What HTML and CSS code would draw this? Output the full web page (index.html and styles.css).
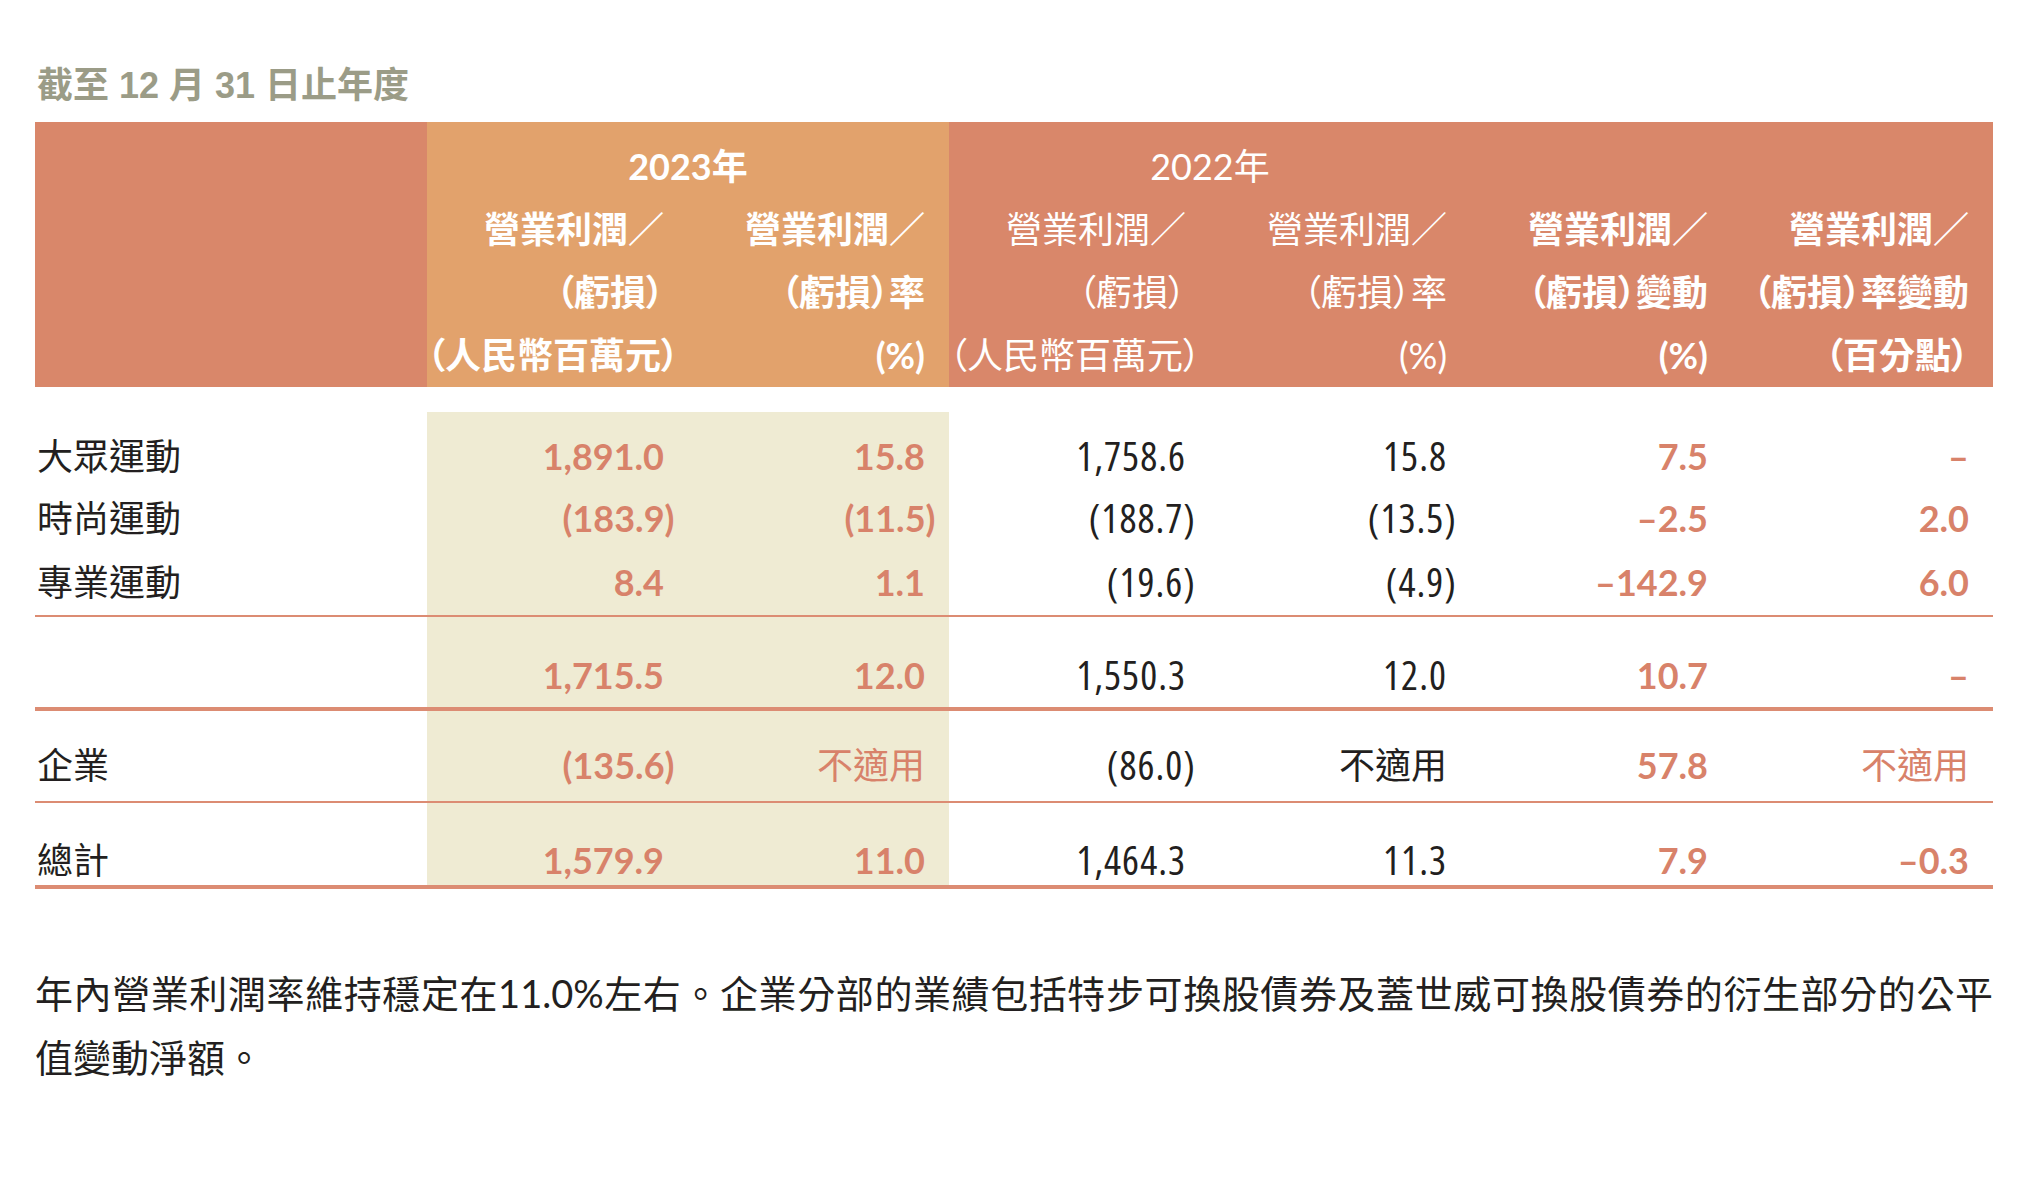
FILE: index.html
```html
<!DOCTYPE html>
<html lang="zh-Hant">
<head>
<meta charset="utf-8">
<title>營業利潤／（虧損）</title>
<link rel="stylesheet" href="styles.css">
</head>
<body>
<div class="page">
  <h2 class="title">截至 12 月 31 日止年度</h2>
  <table class="seg">
    <colgroup>
      <col class="c-label">
      <col class="c-num"><col class="c-num"><col class="c-num">
      <col class="c-num"><col class="c-num"><col class="c-num">
    </colgroup>
    <thead>
      <tr class="yr">
        <th class="lbl"></th>
        <th class="y23 b" colspan="2">2023年</th>
        <th colspan="2">2022年</th>
        <th colspan="2"></th>
      </tr>
      <tr class="hd">
        <th class="lbl"></th>
        <th class="y23 b">營業利潤／<br>（虧損）<br><span class="ov">（人民幣百萬元）</span></th>
        <th class="y23 b">營業利潤／<br>（虧損）率<br>(%)</th>
        <th>營業利潤／<br>（虧損）<br><span class="ov">（人民幣百萬元）</span></th>
        <th>營業利潤／<br>（虧損）率<br>(%)</th>
        <th class="b">營業利潤／<br>（虧損）變動<br>(%)</th>
        <th class="b">營業利潤／<br>（虧損）率變動<br>（百分點）</th>
      </tr>
    </thead>
    <tbody>
      <tr class="gap"><td colspan="7"></td></tr>
      <tr class="r1">
        <td class="lbl">大眾運動</td>
        <td class="s o">1,891.0</td>
        <td class="s o">15.8</td>
        <td class="k">1,758.6</td>
        <td class="k">15.8</td>
        <td class="o">7.5</td>
        <td class="o">–</td>
      </tr>
      <tr class="r2">
        <td class="lbl">時尚運動</td>
        <td class="s o">(183.9<span class="cp">)</span></td>
        <td class="s o">(11.5<span class="cp">)</span></td>
        <td class="k">(188.7<span class="cp">)</span></td>
        <td class="k">(13.5<span class="cp">)</span></td>
        <td class="o">–2.5</td>
        <td class="o">2.0</td>
      </tr>
      <tr class="r3">
        <td class="lbl">專業運動</td>
        <td class="s o">8.4</td>
        <td class="s o">1.1</td>
        <td class="k">(19.6<span class="cp">)</span></td>
        <td class="k">(4.9<span class="cp">)</span></td>
        <td class="o">–142.9</td>
        <td class="o">6.0</td>
      </tr>
      <tr class="sub">
        <td class="lbl"></td>
        <td class="s o">1,715.5</td>
        <td class="s o">12.0</td>
        <td class="k">1,550.3</td>
        <td class="k">12.0</td>
        <td class="o">10.7</td>
        <td class="o">–</td>
      </tr>
      <tr class="corp">
        <td class="lbl">企業</td>
        <td class="s o">(135.6<span class="cp">)</span></td>
        <td class="s o na">不適用</td>
        <td class="k">(86.0<span class="cp">)</span></td>
        <td>不適用</td>
        <td class="o">57.8</td>
        <td class="o na">不適用</td>
      </tr>
      <tr class="tot">
        <td class="lbl">總計</td>
        <td class="s o">1,579.9</td>
        <td class="s o">11.0</td>
        <td class="k">1,464.3</td>
        <td class="k">11.3</td>
        <td class="o">7.9</td>
        <td class="o">–0.3</td>
      </tr>
    </tbody>
  </table>
  <p class="note">年內營業利潤率維持穩定在11.0%左右。企業分部的業績包括特步可換股債券及蓋世威可換股債券的衍生部分的公平值變動淨額。</p>
</div>
</body>
</html>
```

FILE: styles.css
```css
html, body {
  margin: 0;
  padding: 0;
  background: #ffffff;
}

body {
  font-family: "Lato", "Noto Sans CJK TC", sans-serif;
  color: #231f20;
}

.page {
  width: 1958px;
  padding: 62px 0 0 35px;
}

.title {
  margin: 0 0 12px 2px;
  font-family: "Liberation Sans", "Noto Sans CJK TC", sans-serif;
  font-size: 36px;
  line-height: 48px;
  font-weight: 700;
  color: #9b9c87;
}

.seg {
  width: 1958px;
  table-layout: fixed;
  border-collapse: separate;
  border-spacing: 0;
}

.c-label { width: 392px; }
.c-num { width: 261px; }

.seg thead th {
  background: #d9876a;
  color: #ffffff;
  font-weight: 400;
  font-size: 36px;
  line-height: 63px;
  text-align: right;
  vertical-align: top;
  white-space: nowrap;
  padding: 0 24px 0 0;
  font-feature-settings: "palt";
}

.seg thead .yr th {
  text-align: center;
  padding: 13px 0 0 0;
}

.seg thead th.y23 {
  background: #e2a26c;
}

.seg thead th.b {
  font-weight: 700;
}

.ov {
  display: block;
  text-align: left;
  margin-right: -24px;
}

.seg tbody td {
  font-size: 36px;
  line-height: 50px;
  text-align: right;
  vertical-align: top;
  white-space: nowrap;
  padding: 0 24px 0 0;
}

.seg tbody td.lbl {
  text-align: left;
  padding-left: 2px;
}

.seg tbody td.k {
  font-family: "Open Sans", "Noto Sans CJK TC", sans-serif;
  font-size: 40px;
  font-stretch: 75%;
  letter-spacing: 1px;
  font-weight: 400;
}

.seg tbody td.s {
  background: #efebd3;
}

.seg tbody td.o {
  color: #d8826a;
  font-weight: 700;
}

.seg tbody td.na {
  font-weight: 400;
}

.cp {
  margin-right: -0.29em;
}

.seg tbody td.k .cp {
  margin-right: calc(-0.22em - 1px);
}

.seg tr.gap td {
  height: 25px;
  padding: 0;
  line-height: 0;
  font-size: 0;
}

.seg tr.r1 td { padding-top: 19px; padding-bottom: 6px; }
.seg tr.r2 td { padding-top: 6px; padding-bottom: 7px; }
.seg tr.r3 td { padding-top: 7px; padding-bottom: 8px; border-bottom: 2px solid #dc8c73; }
.seg tr.sub td { padding-top: 33px; padding-bottom: 7px; border-bottom: 4px solid #dc8c73; }
.seg tr.corp td { padding-top: 29px; padding-bottom: 11px; border-bottom: 2px solid #dc8c73; }
.seg tr.tot td { padding-top: 32px; padding-bottom: 0; border-bottom: 4px solid #dc8c73; }

.note {
  width: 1958px;
  margin: 72px 0 0 0;
  font-size: 38px;
  line-height: 64px;
  text-align: justify;
  color: #231f20;
}
```
